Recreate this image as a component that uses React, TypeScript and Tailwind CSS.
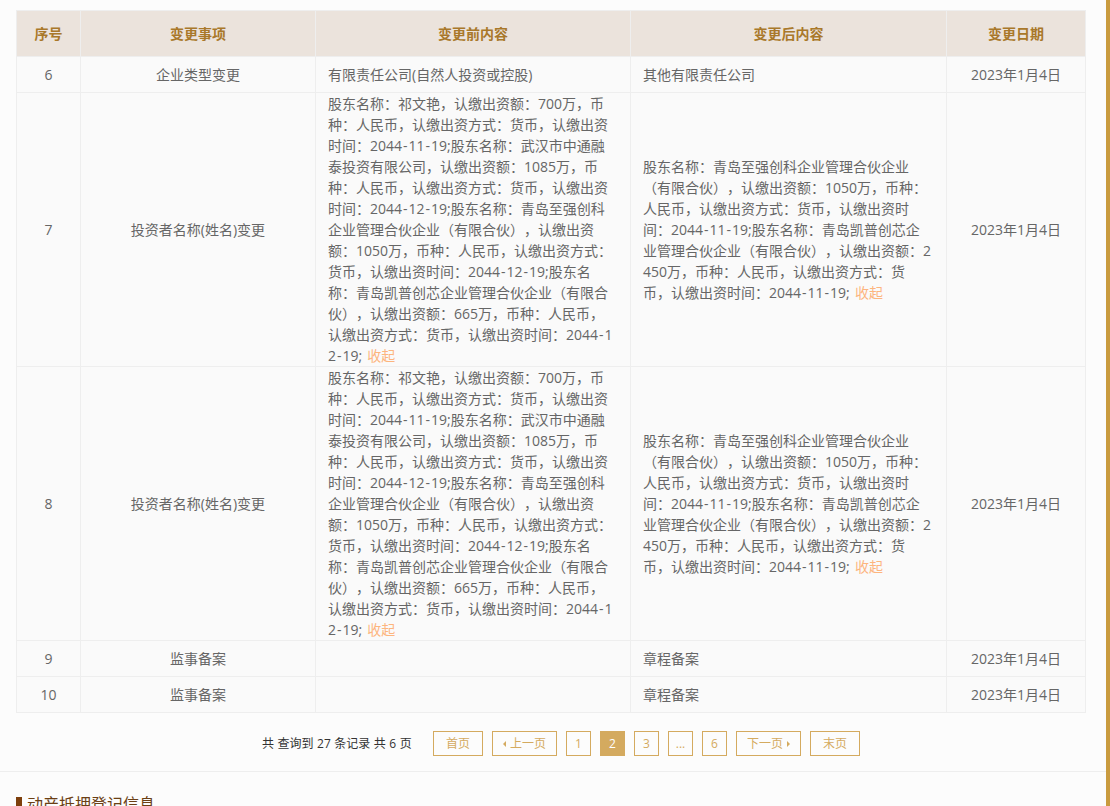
const FONT = "font-['Open_Sans','Noto_Sans_CJK_SC',sans-serif]";

const beforeLines = [
  "股东名称：祁文艳，认缴出资额：700万，币",
  "种：人民币，认缴出资方式：货币，认缴出资",
  "时间：2044-11-19;股东名称：武汉市中通融",
  "泰投资有限公司，认缴出资额：1085万，币",
  "种：人民币，认缴出资方式：货币，认缴出资",
  "时间：2044-12-19;股东名称：青岛至强创科",
  "企业管理合伙企业（有限合伙），认缴出资",
  "额：1050万，币种：人民币，认缴出资方式：",
  "货币，认缴出资时间：2044-12-19;股东名",
  "称：青岛凯普创芯企业管理合伙企业（有限合",
  "伙），认缴出资额：665万，币种：人民币，",
  "认缴出资方式：货币，认缴出资时间：2044-1",
  "2-19; ",
];

const afterLines = [
  "股东名称：青岛至强创科企业管理合伙企业",
  "（有限合伙），认缴出资额：1050万，币种：",
  "人民币，认缴出资方式：货币，认缴出资时",
  "间：2044-11-19;股东名称：青岛凯普创芯企",
  "业管理合伙企业（有限合伙），认缴出资额：2",
  "450万，币种：人民币，认缴出资方式：货",
  "币，认缴出资时间：2044-11-19; ",
];

// the hyphen in the reference font is wider than the Open Sans one
function Line({ text }: { text: string }) {
  const parts = text.split("-");
  return (
    <>
      {parts.map((part, i) => (
        <span key={i}>
          {part}
          {i < parts.length - 1 && <span className="mx-[1px]">-</span>}
        </span>
      ))}
    </>
  );
}

function Expanded({ lines }: { lines: string[] }) {
  return (
    <>
      {lines.map((line, i) => (
        <span key={i} className="block whitespace-pre">
          <Line text={line} />
          {i === lines.length - 1 && <a className="ml-[1.5px] text-[#fdb57e]">收起</a>}
        </span>
      ))}
    </>
  );
}

const rows = [
  { no: 6, item: "企业类型变更", before: "有限责任公司(自然人投资或控股)", after: "其他有限责任公司" },
  { no: 7, item: "投资者名称(姓名)变更", before: <Expanded lines={beforeLines} />, after: <Expanded lines={afterLines} /> },
  { no: 8, item: "投资者名称(姓名)变更", before: <Expanded lines={beforeLines} />, after: <Expanded lines={afterLines} /> },
  { no: 9, item: "监事备案", before: "", after: "章程备案" },
  { no: 10, item: "监事备案", before: "", after: "章程备案" },
];

const headers = [
  { label: "序号", width: "w-[64px]" },
  { label: "变更事项", width: "w-[235px]" },
  { label: "变更前内容", width: "w-[315px]" },
  { label: "变更后内容", width: "w-[316px]" },
  { label: "变更日期", width: "" },
];

const cell = "border border-[#eeeeee] leading-[21px]";

function PageBtn({ children, active, className = "" }: { children: React.ReactNode; active?: boolean; className?: string }) {
  return (
    <span
      className={`flex h-[25px] items-center justify-center gap-[4px] border border-[#d4aa5f] text-[12px] ${
        active ? "bg-[#d4aa5f] text-white" : "text-[#d4aa5f]"
      } ${className}`}
    >
      {children}
    </span>
  );
}

export default function App() {
  return (
    <div className={`relative h-[806px] overflow-hidden bg-[#fcfcfc] [text-spacing-trim:space-all] ${FONT}`}>
      <div className="absolute bottom-0 right-0 top-0 w-[4px] bg-[#c99b3f]" />
      <div className="px-[16px] pt-[10px]">
        <table className="w-[1070px] table-fixed border-collapse text-[14px] text-[#666666]">
          <thead>
            <tr className="h-[46px] bg-[#ebe3dc]">
              {headers.map((h) => (
                <th key={h.label} className={`${cell} ${h.width} text-center font-bold text-[#a9782a]`}>
                  {h.label}
                </th>
              ))}
            </tr>
          </thead>
          <tbody className="bg-[#fafafa]">
            {rows.map((r) => (
              <tr key={r.no} className="h-[36px]">
                <td className={`${cell} text-center`}>{r.no}</td>
                <td className={`${cell} text-center`}>{r.item}</td>
                <td className={`${cell} px-[12px]`}>{r.before}</td>
                <td className={`${cell} px-[12px]`}>{r.after}</td>
                <td className={`${cell} text-center`}>2023年1月4日</td>
              </tr>
            ))}
          </tbody>
        </table>

        <div className="ml-[246px] mt-[18px] flex h-[25px] items-center text-[12px] text-[#333333]">
          <span className="w-[171px] [word-spacing:0.4px]">共 查询到 27 条记录 共 6 页</span>
          <div className="flex gap-[9px]">
            <PageBtn className="w-[50px]">首页</PageBtn>
            <PageBtn className="w-[65px]">
              <span className="h-0 w-0 border-y-[3px] border-r-[3px] border-y-transparent border-r-[#d4aa5f]" />
              上一页
            </PageBtn>
            <PageBtn className="w-[25px]">1</PageBtn>
            <PageBtn active className="w-[25px]">2</PageBtn>
            <PageBtn className="w-[25px]">3</PageBtn>
            <PageBtn className="w-[25px]">...</PageBtn>
            <PageBtn className="w-[25px]">6</PageBtn>
            <PageBtn className="w-[65px]">
              下一页
              <span className="h-0 w-0 border-y-[3px] border-l-[3px] border-y-transparent border-l-[#d4aa5f]" />
            </PageBtn>
            <PageBtn className="w-[50px]">末页</PageBtn>
          </div>
        </div>
      </div>

      <div className="mt-[15px] border-t border-[#eeeeee] px-[16px] pt-[25px]">
        <h3 className="h-[20px] border-l-[6px] border-[#7d3f0c] pl-[5px] text-[16px] font-normal leading-[14px] text-[#6b3f14]">
          动产抵押登记信息
        </h3>
      </div>
    </div>
  );
}
